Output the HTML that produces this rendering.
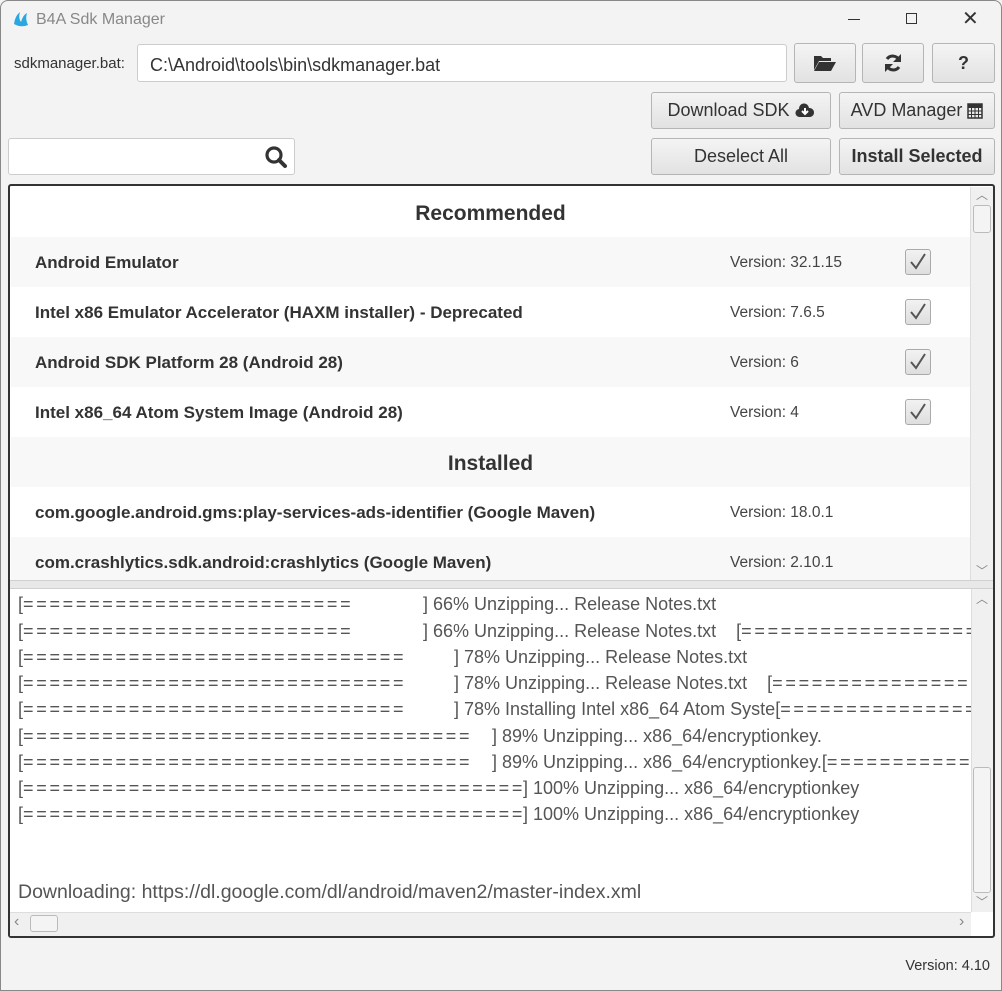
<!DOCTYPE html>
<html><head><meta charset="utf-8"><style>
*{margin:0;padding:0;box-sizing:border-box}
body{width:1002px;height:991px;background:#f3f3f3;font-family:"Liberation Sans",sans-serif;position:relative;overflow:hidden;color:#333}
.a{position:absolute}
.btn{position:absolute;border:1px solid #b5b5b5;border-radius:3px;background:linear-gradient(#f4f4f4,#e2e2e2);display:flex;align-items:center;justify-content:center;font-size:18px;color:#333}
.row{position:absolute;left:11px;width:959px;height:50px;font-size:17px;font-weight:bold;color:#333}
.row .n{position:absolute;left:24px;top:16px}
.row .v{position:absolute;left:719px;top:17px;font-weight:normal;font-size:15.5px;color:#444}
.cb{position:absolute;left:894px;top:12px;width:26px;height:26px;border:1px solid #aaa;border-radius:3px;background:linear-gradient(#f2f2f2,#dedede)}
.hd{text-align:center;font-size:21px;font-weight:bold;padding-top:15px}
.log{position:absolute;left:18px;font-size:18px;color:#555;white-space:nowrap}
.eq{letter-spacing:2.7px}
</style></head><body>
<div class="a" style="left:0;top:0;width:1002px;height:991px;border:1px solid #888;border-radius:8px 8px 0 0"></div>
<svg class="a" style="left:12px;top:10px" width="18" height="18" viewBox="0 0 18 18"><path d="M2 14 Q3 6 8 2 Q6 8 9 12 Q11 5 15 3 Q13 9 16 15 Q9 18 2 14Z" fill="#2aa7e0"/></svg>
<div class="a" style="left:36px;top:11px;font-size:16px;color:#888">B4A Sdk Manager</div>
<div class="a" style="left:848px;top:19px;width:12px;height:1px;background:#333"></div>
<div class="a" style="left:906px;top:13px;width:11px;height:11px;border:1px solid #333"></div>
<div class="a" style="left:962px;top:6px;font-size:20px;color:#333">✕</div>

<div class="a" style="left:14px;top:55px;font-size:15px;color:#333">sdkmanager.bat:</div>
<div class="a" style="left:137px;top:44px;width:650px;height:38px;background:#fff;border:1px solid #ccc;border-radius:3px;font-size:18px;padding:10px 12px;color:#333">C:\Android\tools\bin\sdkmanager.bat</div>
<div class="btn" style="left:794px;top:43px;width:62px;height:40px"><svg width="24" height="18" viewBox="0 0 24 18"><path d="M1 2h7l2 2h8v3H6L1 16Z" fill="#333"/><path d="M6 8h17l-5 9H1Z" fill="#333"/></svg></div>
<div class="btn" style="left:862px;top:43px;width:62px;height:40px"><svg width="20" height="20" viewBox="0 0 20 20"><path d="M16 7A7 7 0 0 0 4 6" stroke="#333" stroke-width="3" fill="none"/><path d="M18 1v8h-8Z" fill="#333"/><path d="M4 13a7 7 0 0 0 12 1" stroke="#333" stroke-width="3" fill="none"/><path d="M2 19v-8h8Z" fill="#333"/></svg></div>
<div class="btn" style="left:932px;top:43px;width:63px;height:40px;font-weight:bold;font-size:18px">?</div>
<div class="btn" style="left:651px;top:92px;width:180px;height:37px">Download SDK&nbsp;<svg width="20" height="15" viewBox="0 0 20 15"><path d="M5 14a4 4 0 0 1-1-8 5 5 0 0 1 10-1 4.5 4.5 0 0 1 1 9Z" fill="#333"/><path d="M10 5v5M7 8l3 3 3-3" stroke="#fff" stroke-width="2" fill="none"/></svg></div>
<div class="btn" style="left:839px;top:92px;width:156px;height:37px">AVD Manager&nbsp;<svg width="16" height="16" viewBox="0 0 16 16"><rect x="1" y="1" width="14" height="14" fill="none" stroke="#333" stroke-width="1.5"/><rect x="1" y="1" width="14" height="4" fill="#333"/><path d="M1 8h14M1 11.5h14M4.5 5v10M8 5v10M11.5 5v10" stroke="#333"/></svg></div>
<div class="a" style="left:8px;top:138px;width:287px;height:37px;background:#fff;border:1px solid #ccc;border-radius:3px"></div>
<svg class="a" style="left:264px;top:145px" width="24" height="24" viewBox="0 0 24 24"><circle cx="10" cy="10" r="7" stroke="#333" stroke-width="3.2" fill="none"/><path d="M15 15l6 6" stroke="#333" stroke-width="4" stroke-linecap="round"/></svg>
<div class="btn" style="left:651px;top:138px;width:180px;height:37px">Deselect All</div>
<div class="btn" style="left:839px;top:138px;width:156px;height:37px;font-weight:bold">Install Selected</div>

<div class="a" style="left:8px;top:184px;width:987px;height:754px;border:2px solid #333;border-radius:3px;background:#fff"></div>
<div class="row hd" style="top:187px;background:#fff">Recommended</div>
<div class="row" style="top:237px;background:#f8f8f8"><span class="n">Android Emulator</span><span class="v">Version: 32.1.15</span><div class="cb"><svg width="24" height="24" viewBox="0 0 24 24"><path d="M5 12l5 6 9-14" stroke="#555" stroke-width="2" fill="none"/></svg></div></div>
<div class="row" style="top:287px;background:#fff"><span class="n">Intel x86 Emulator Accelerator (HAXM installer) - Deprecated</span><span class="v">Version: 7.6.5</span><div class="cb"><svg width="24" height="24" viewBox="0 0 24 24"><path d="M5 12l5 6 9-14" stroke="#555" stroke-width="2" fill="none"/></svg></div></div>
<div class="row" style="top:337px;background:#f8f8f8"><span class="n">Android SDK Platform 28 (Android 28)</span><span class="v">Version: 6</span><div class="cb"><svg width="24" height="24" viewBox="0 0 24 24"><path d="M5 12l5 6 9-14" stroke="#555" stroke-width="2" fill="none"/></svg></div></div>
<div class="row" style="top:387px;background:#fff"><span class="n">Intel x86_64 Atom System Image (Android 28)</span><span class="v">Version: 4</span><div class="cb"><svg width="24" height="24" viewBox="0 0 24 24"><path d="M5 12l5 6 9-14" stroke="#555" stroke-width="2" fill="none"/></svg></div></div>
<div class="row hd" style="top:437px;background:#f8f8f8">Installed</div>
<div class="row" style="top:487px;background:#fff"><span class="n">com.google.android.gms:play-services-ads-identifier (Google Maven)</span><span class="v">Version: 18.0.1</span></div>
<div class="row" style="top:537px;background:#f8f8f8;height:43px"><span class="n">com.crashlytics.sdk.android:crashlytics (Google Maven)</span><span class="v">Version: 2.10.1</span></div>
<div class="a" style="left:970px;top:187px;width:23px;height:393px;background:#f0f0f0;border-left:1px solid #ddd"></div>
<div class="a" style="left:976px;top:186px;font-size:12px;color:#888">︿</div>
<div class="a" style="left:973px;top:205px;width:18px;height:28px;border:1px solid #bbb;border-radius:3px;background:#f4f4f4"></div>
<div class="a" style="left:976px;top:562px;font-size:12px;color:#888">﹀</div>
<div class="a" style="left:10px;top:580px;width:983px;height:9px;background:#e8e8e8;border-top:1px solid #d0d0d0;border-bottom:1px solid #d0d0d0"></div>

<div class="a" style="left:11px;top:589px;width:960px;height:323px;overflow:hidden">
<div style="position:absolute;left:-11px;top:-589px;width:1000px;height:1000px">
<div class="log" style="top:594px">[<span class="eq">=========================</span><span style="position:absolute;left:405px">] 66% Unzipping... Release Notes.txt</span></div>
<div class="log" style="top:621px">[<span class="eq">=========================</span><span style="position:absolute;left:405px">] 66% Unzipping... Release Notes.txt&nbsp;&nbsp;&nbsp;&nbsp;[<span class="eq">======================</span></span></div>
<div class="log" style="top:647px">[<span class="eq">=============================</span><span style="position:absolute;left:436px">] 78% Unzipping... Release Notes.txt</span></div>
<div class="log" style="top:673px">[<span class="eq">=============================</span><span style="position:absolute;left:436px">] 78% Unzipping... Release Notes.txt&nbsp;&nbsp;&nbsp;&nbsp;[<span class="eq">================</span></span></div>
<div class="log" style="top:699px">[<span class="eq">=============================</span><span style="position:absolute;left:436px">] 78% Installing Intel x86_64 Atom Syste[<span class="eq">================</span></span></div>
<div class="log" style="top:726px">[<span class="eq">==================================</span><span style="position:absolute;left:474px">] 89% Unzipping... x86_64/encryptionkey.</span></div>
<div class="log" style="top:752px">[<span class="eq">==================================</span><span style="position:absolute;left:474px">] 89% Unzipping... x86_64/encryptionkey.[<span class="eq">==============</span></span></div>
<div class="log" style="top:778px">[<span class="eq">======================================</span><span style="position:absolute;left:505px">] 100% Unzipping... x86_64/encryptionkey</span></div>
<div class="log" style="top:804px">[<span class="eq">======================================</span><span style="position:absolute;left:505px">] 100% Unzipping... x86_64/encryptionkey</span></div>
<div class="log" style="top:881px;font-size:19.5px">Downloading: https://dl.google.com/dl/android/maven2/master-index.xml</div>
</div></div>
<div class="a" style="left:971px;top:589px;width:22px;height:323px;background:#f0f0f0;border-left:1px solid #ddd"></div>
<div class="a" style="left:976px;top:590px;font-size:12px;color:#888">︿</div>
<div class="a" style="left:973px;top:767px;width:18px;height:126px;border:1px solid #bbb;border-radius:3px;background:#f4f4f4"></div>
<div class="a" style="left:976px;top:893px;font-size:12px;color:#888">﹀</div>
<div class="a" style="left:10px;top:912px;width:961px;height:24px;background:#f0f0f0;border-top:1px solid #ddd"></div>
<div class="a" style="left:14px;top:913px;font-size:16px;color:#888">‹</div>
<div class="a" style="left:30px;top:915px;width:28px;height:17px;border:1px solid #bbb;border-radius:3px;background:#f4f4f4"></div>
<div class="a" style="left:959px;top:913px;font-size:16px;color:#888">›</div>

<div class="a" style="right:12px;top:958px;font-size:14.5px;color:#333">Version: 4.10</div>
</body></html>
